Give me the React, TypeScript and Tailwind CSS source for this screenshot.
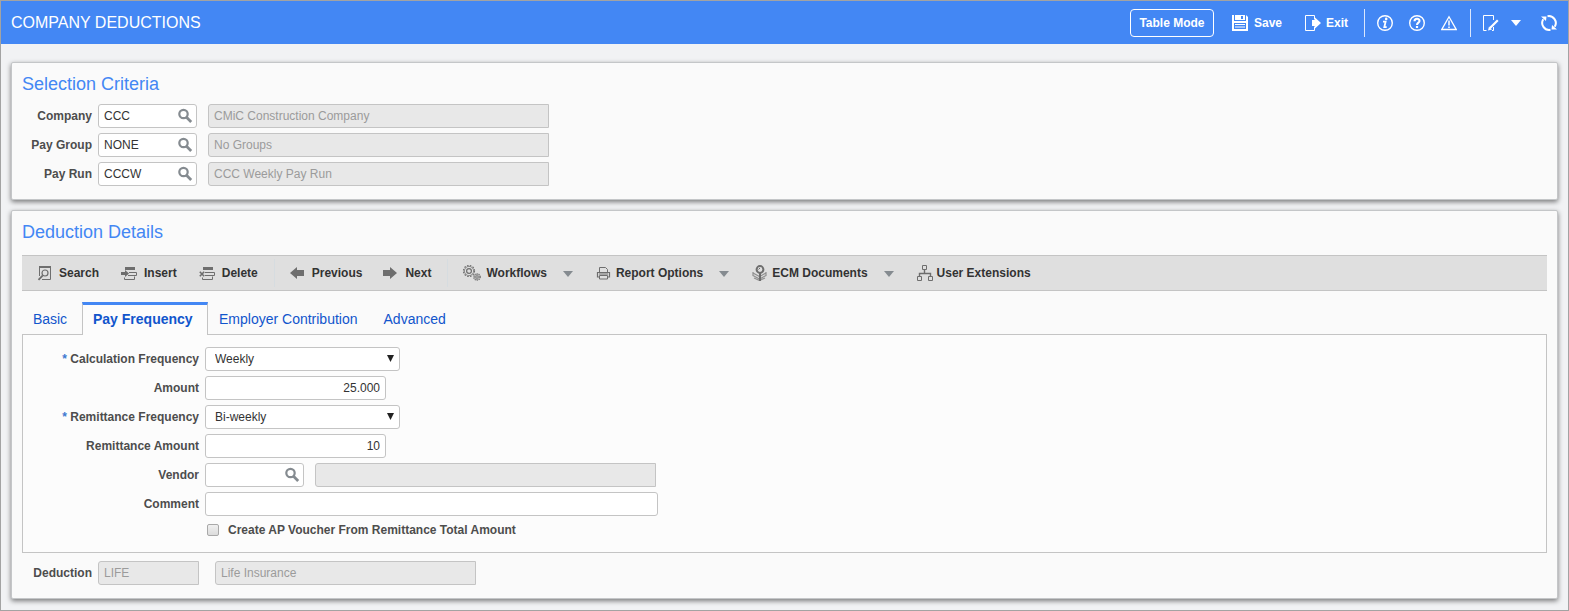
import type { ReactNode } from "react";

function Icon({ children }: { children: ReactNode }) {
  return (
    <svg
      className="shrink-0"
      width="16"
      height="16"
      viewBox="0 0 16 16"
      fill="none"
      stroke="currentColor"
      aria-hidden="true"
    >
      {children}
    </svg>
  );
}

function SaveIcon() {
  return (
    <Icon>
      <path
        fill="currentColor"
        stroke="none"
        fillRule="evenodd"
        d="M0 0h2v6h12V0l2 2v14H0zM2 8v6h12V8zM3 0h10v5H3zM9 1v3h2V1z"
      />
      <path d="M3 9.500h10M3 12h10" strokeWidth="1" />
    </Icon>
  );
}

function ExitIcon() {
  return (
    <Icon>
      <path d="M9.500 4.500V.5H.5v15h9v-4" />
      <path fill="currentColor" stroke="none" d="M7 5h3V2.500l6 5.500-6 5.500V11H7z" />
    </Icon>
  );
}

function InfoIcon() {
  return (
    <Icon>
      <circle cx="8" cy="8" r="7.300" strokeWidth="1.400" />
      <path strokeWidth="1.800" d="M6 6.700h2.600L7.300 12.200h2.400" />
      <circle cx="9.200" cy="3.900" r="1.300" fill="currentColor" stroke="none" />
    </Icon>
  );
}

function HelpIcon() {
  return (
    <Icon>
      <circle cx="8" cy="8" r="7.300" strokeWidth="1.400" />
      <path strokeWidth="2.100" d="M5.500 6.300C5.500 3 10.600 3 10.500 6 10.400 7.800 8 7.600 8 10" />
      <path strokeWidth="2.200" d="M8 11v2" />
    </Icon>
  );
}

function WarningIcon() {
  return (
    <Icon>
      <path strokeWidth="1.300" d="M8 1.800L15.200 14.500H.8z" />
      <path strokeWidth="1.500" d="M8 5.500v5M8 11.500v1.500" />
    </Icon>
  );
}

function EditIcon() {
  return (
    <Icon>
      <path d="M10.500 5V.5H.5v15h3M9 15.500h1.500V12" />
      <path strokeWidth="2.200" d="M14.800 5.200L7 13" />
      <path fill="currentColor" stroke="none" d="M5 15.500l1-4 3 3z" />
    </Icon>
  );
}

function RefreshIcon() {
  return (
    <Icon>
      <path strokeWidth="2" d="M9.500 14.800A7 7 0 0 1 2.300 4.200M6.500 1.200A7 7 0 0 1 13.700 11.800" />
      <path fill="currentColor" stroke="none" d="M0 1.500h5.500L5 6zM16 14.500h-5.500L11 10z" />
    </Icon>
  );
}

function MagnifierIcon() {
  return (
    <Icon>
      <circle cx="6.500" cy="6" r="4.200" strokeWidth="2.200" />
      <path strokeWidth="2.800" d="M9.500 9.200l4.700 4.700" />
    </Icon>
  );
}

function FindIcon() {
  return (
    <Icon>
      <path d="M3.500 11V1.500h11v13H6" />
      <path strokeWidth="2" d="M3 2h12" />
      <circle cx="9" cy="8" r="3" strokeWidth="1.200" />
      <path strokeWidth="1.800" d="M6.800 10.300L2.500 14.800" />
    </Icon>
  );
}

function InsertIcon() {
  return (
    <Icon>
      <path fill="currentColor" stroke="none" d="M4 2h10v3H4zM0 7h4V5l4 3.500L4 12v-2H0z" />
      <path d="M8 7.500h7.500v3H7M3.500 12.500v2h10v-3" />
    </Icon>
  );
}

function DeleteIcon() {
  return (
    <Icon>
      <path fill="currentColor" stroke="none" d="M4 2h10v3H4z" />
      <path strokeWidth="1.600" d="M.8 6.800l4.400 4.400M5.200 6.800L.8 11.200" />
      <path d="M6 7.500h9.500v3H6M3.500 12.500v2h10v-3" />
    </Icon>
  );
}

function PreviousIcon() {
  return (
    <Icon>
      <path fill="currentColor" stroke="none" d="M1 8l7-6v3h7v6H8v3z" />
    </Icon>
  );
}

function NextIcon() {
  return (
    <Icon>
      <path fill="currentColor" stroke="none" d="M15 8L8 2v3H1v6h7v3z" />
    </Icon>
  );
}

function GearsIcon() {
  return (
    <svg className="shrink-0" width="20" height="16" viewBox="0 0 20 16" fill="none" stroke="currentColor" aria-hidden="true">
      <circle cx="7" cy="6" r="5.500" strokeWidth="1.200" strokeDasharray="1.600 1.300" />
      <circle cx="7" cy="6" r="4.600" strokeWidth=".7" />
      <circle cx="7" cy="6" r="2.400" strokeWidth="1.200" />
      <circle cx="15" cy="12" r="3.300" strokeWidth="1.100" strokeDasharray="1.200 .9" />
      <circle cx="15" cy="12" r="2.600" strokeWidth=".6" />
      <circle cx="15" cy="12" r="1.300" strokeWidth="1" />
    </svg>
  );
}

function PrinterIcon() {
  return (
    <Icon>
      <path d="M3.500 7V2.500h6l2 2V7" />
      <path strokeWidth="1.200" d="M3 12H1.500V7.500h12V12H12" />
      <path d="M3.500 10.500h8v3.500h-8zM3 9h9" />
    </Icon>
  );
}

function DocumentsIcon() {
  return (
    <Icon>
      <path strokeWidth="1.200" opacity=".7" d="M1 8l6.500 3.500L14 8M1 10.500L7.500 14 14 10.500M2 13l5.500 2.500L13 13M1 7v4M14 7v4" />
      <circle cx="8" cy="4.500" r="3.400" strokeWidth="2" />
      <path strokeWidth="2" d="M8 8v8" />
      <path d="M6.500 4.500l1.500-1.500" />
    </Icon>
  );
}

function ExtensionsIcon() {
  return (
    <Icon>
      <path d="M5.500.5h4v4h-4zM.5 11.500h4v4h-4zM11.500 11.500h4v4h-4z" />
      <path strokeWidth="1.400" d="M7.500 5v3.500M2.500 11V8.500h11V11" />
    </Icon>
  );
}

function Caret() {
  return (
    <svg className="shrink-0" width="10" height="6" viewBox="0 0 10 6" fill="currentColor" aria-hidden="true">
      <path d="M0 0h10L5 6z" />
    </svg>
  );
}

const labelClass = "shrink-0 text-right font-bold text-[#4d4d4d]";
const inputClass =
  "h-6 rounded-[3px] border border-[#c4c4c4] bg-white px-[5px] text-[#333] outline-none focus:border-[#4387f4]";
const readOnlyClass =
  "h-6 rounded-l-[3px] border border-[#c4c4c4] bg-[#e8e8e8] px-[5px] text-[#9b9b9b] outline-none";

function Lookup({ id, value }: { id: string; value: string }) {
  return (
    <div className="relative w-[99px]">
      <input id={id} defaultValue={value} className={`${inputClass} block w-full pr-6`} />
      <button type="button" aria-label="Look up" className="absolute top-1 right-1 text-[#858b90]">
        <MagnifierIcon />
      </button>
    </div>
  );
}

function SelectionRow({ id, label, code, name }: { id: string; label: string; code: string; name: string }) {
  return (
    <div className="flex items-center">
      <label htmlFor={id} className={`${labelClass} mr-1.5 w-[70px]`}>
        {label}
      </label>
      <Lookup id={id} value={code} />
      <input readOnly aria-label={`${label} name`} value={name} className={`${readOnlyClass} ml-[11px] w-[341px]`} />
    </div>
  );
}

function FieldRow({ id, label, required, children }: { id: string; label: string; required?: boolean; children: ReactNode }) {
  return (
    <div className="flex items-center">
      <label htmlFor={id} className={`${labelClass} mr-1.5 w-[176px]`}>
        {required && <span className="text-[#3f78d0]">* </span>}
        {label}
      </label>
      {children}
    </div>
  );
}

function FrequencySelect({ id, value }: { id: string; value: string }) {
  return (
    <div className="relative w-[195px]">
      <select id={id} defaultValue={value} className={`${inputClass} block w-full appearance-none pl-[9px]`}>
        <option>Weekly</option>
        <option>Bi-weekly</option>
        <option>Monthly</option>
      </select>
      <svg className="pointer-events-none absolute top-2 right-1.5" width="7" height="7" viewBox="0 0 7 7" fill="#222">
        <path d="M0 0h7L3.500 7z" />
      </svg>
    </div>
  );
}

function ToolButton({ icon, label, menu, tight }: { icon: ReactNode; label: string; menu?: boolean; tight?: boolean }) {
  return (
    <button type="button" className="flex items-center text-[#6e6e6e]">
      {icon}
      <span className={tight ? "ml-1 font-bold text-[#333]" : "ml-[7px] font-bold text-[#333]"}>{label}</span>
      {menu && (
        <span className="ml-4 pt-0.5 text-[#858b90]">
          <Caret />
        </span>
      )}
    </button>
  );
}

function Header() {
  return (
    <header className="flex h-[43px] items-center bg-[#4387f4] pr-[11px] pl-2.5 text-white">
      <h1 className="text-base">COMPANY DEDUCTIONS</h1>
      <div className="ml-auto flex items-center font-bold">
        <button type="button" className="h-7 w-[84px] rounded border border-white">
          Table Mode
        </button>
        <button type="button" className="ml-[18px] flex items-center gap-1.5">
          <SaveIcon />
          Save
        </button>
        <button type="button" className="ml-[23px] flex items-center gap-[5px]">
          <ExitIcon />
          Exit
        </button>
        <div className="ml-4 flex h-7 items-center gap-4 border-l border-[#dbe7fd] pl-3">
          <button type="button" aria-label="Info">
            <InfoIcon />
          </button>
          <button type="button" aria-label="Help">
            <HelpIcon />
          </button>
          <button type="button" aria-label="Warnings">
            <WarningIcon />
          </button>
        </div>
        <div className="ml-[13px] flex h-7 items-center border-l border-[#dbe7fd] pl-3">
          <button type="button" aria-label="Edit" className="flex items-center gap-3">
            <EditIcon />
            <Caret />
          </button>
          <button type="button" aria-label="Refresh" className="ml-5">
            <RefreshIcon />
          </button>
        </div>
      </div>
    </header>
  );
}

function Panel({ title, children }: { title: string; children: ReactNode }) {
  return (
    <section className="rounded-[2px] border border-[#c4c6c8] bg-[#fafafa] px-2.5 pt-[9px] pb-[13px] shadow-[0_2px_5px_rgba(0,0,0,0.5)]">
      <h2 className="text-lg leading-6 text-[#4387f4]">{title}</h2>
      {children}
    </section>
  );
}

function Toolbar() {
  return (
    <div className="mt-[11px] flex h-9 items-center border-y border-[#c4c4c4] bg-[#dfdfdf] pl-3.5">
      <div className="flex gap-[22px] pr-4">
        <ToolButton icon={<FindIcon />} label="Search" />
        <ToolButton icon={<InsertIcon />} label="Insert" />
        <ToolButton icon={<DeleteIcon />} label="Delete" />
      </div>
      <div className="flex h-7 gap-5 border-l border-[#d6dce0] pr-4 pl-3.5">
        <ToolButton icon={<PreviousIcon />} label="Previous" />
        <ToolButton icon={<NextIcon />} label="Next" />
      </div>
      <div className="flex h-7 gap-[23px] border-l border-[#d6dce0] pl-3.5">
        <ToolButton icon={<GearsIcon />} label="Workflows" menu tight />
        <ToolButton icon={<PrinterIcon />} label="Report Options" menu tight />
        <ToolButton icon={<DocumentsIcon />} label="ECM Documents" menu tight />
        <ToolButton icon={<ExtensionsIcon />} label="User Extensions" tight />
      </div>
    </div>
  );
}

function Tabs() {
  return (
    <div role="tablist" className="mt-[11px] flex h-[33px] text-sm text-[#1155cc]">
      <button type="button" role="tab" className="w-[60px] pr-1">
        Basic
      </button>
      {/* The selected tab runs over the border of the panel below it */}
      <button
        type="button"
        role="tab"
        aria-selected="true"
        className="z-10 w-[126px] border-x border-t-3 border-x-[#c4c4c4] border-t-[#4387f4] bg-[#fcfcfc] pb-0.5 pl-2.5 text-left font-bold"
      >
        Pay Frequency
      </button>
      <button type="button" role="tab" className="px-[11px]">
        Employer Contribution
      </button>
      <button type="button" role="tab" className="px-[15px]">
        Advanced
      </button>
    </div>
  );
}

function App() {
  return (
    <div className="min-h-screen border border-[#a3a3a3] bg-[#f1f2f4] font-['Liberation_Sans',Arial,sans-serif] text-xs">
      <Header />
      <main className="flex flex-col gap-2.5 px-2.5 pt-[18px] pb-[11px]">
        <Panel title="Selection Criteria">
          <div className="mt-2 flex flex-col gap-[5px]">
            <SelectionRow id="company" label="Company" code="CCC" name="CMiC Construction Company" />
            <SelectionRow id="pay-group" label="Pay Group" code="NONE" name="No Groups" />
            <SelectionRow id="pay-run" label="Pay Run" code="CCCW" name="CCC Weekly Pay Run" />
          </div>
        </Panel>

        <Panel title="Deduction Details">
          <Toolbar />
          <Tabs />
          <div role="tabpanel" className="-mt-px flex flex-col gap-[5px] border border-[#c4c4c4] bg-[#fcfcfc] pt-3 pb-[13px]">
            <FieldRow id="calc-frequency" label="Calculation Frequency" required>
              <FrequencySelect id="calc-frequency" value="Weekly" />
            </FieldRow>
            <FieldRow id="amount" label="Amount">
              <input id="amount" defaultValue="25.000" className={`${inputClass} w-[181px] text-right`} />
            </FieldRow>
            <FieldRow id="remit-frequency" label="Remittance Frequency" required>
              <FrequencySelect id="remit-frequency" value="Bi-weekly" />
            </FieldRow>
            <FieldRow id="remit-amount" label="Remittance Amount">
              <input id="remit-amount" defaultValue="10" className={`${inputClass} w-[181px] text-right`} />
            </FieldRow>
            <FieldRow id="vendor" label="Vendor">
              <Lookup id="vendor" value="" />
              <input readOnly aria-label="Vendor name" value="" className={`${readOnlyClass} ml-[11px] w-[341px]`} />
            </FieldRow>
            <FieldRow id="comment" label="Comment">
              <input id="comment" className={`${inputClass} w-[453px]`} />
            </FieldRow>
            <label className="flex h-[18px] items-center gap-[9px] pl-[184px] font-bold text-[#4d4d4d]">
              <input
                type="checkbox"
                className="size-3 appearance-none rounded-[2px] border border-[#a9a9a9] bg-linear-to-b from-[#f0f0f0] to-[#dcdcdc] checked:bg-[#4387f4]"
              />
              Create AP Voucher From Remittance Total Amount
            </label>
          </div>
          <div className="mt-2 flex items-center">
            <label htmlFor="deduction" className={`${labelClass} mr-1.5 w-[70px]`}>
              Deduction
            </label>
            <input id="deduction" readOnly value="LIFE" className={`${readOnlyClass} w-[101px]`} />
            <input readOnly aria-label="Deduction name" value="Life Insurance" className={`${readOnlyClass} ml-4 w-[261px]`} />
          </div>
        </Panel>
      </main>
    </div>
  );
}

export default App;
